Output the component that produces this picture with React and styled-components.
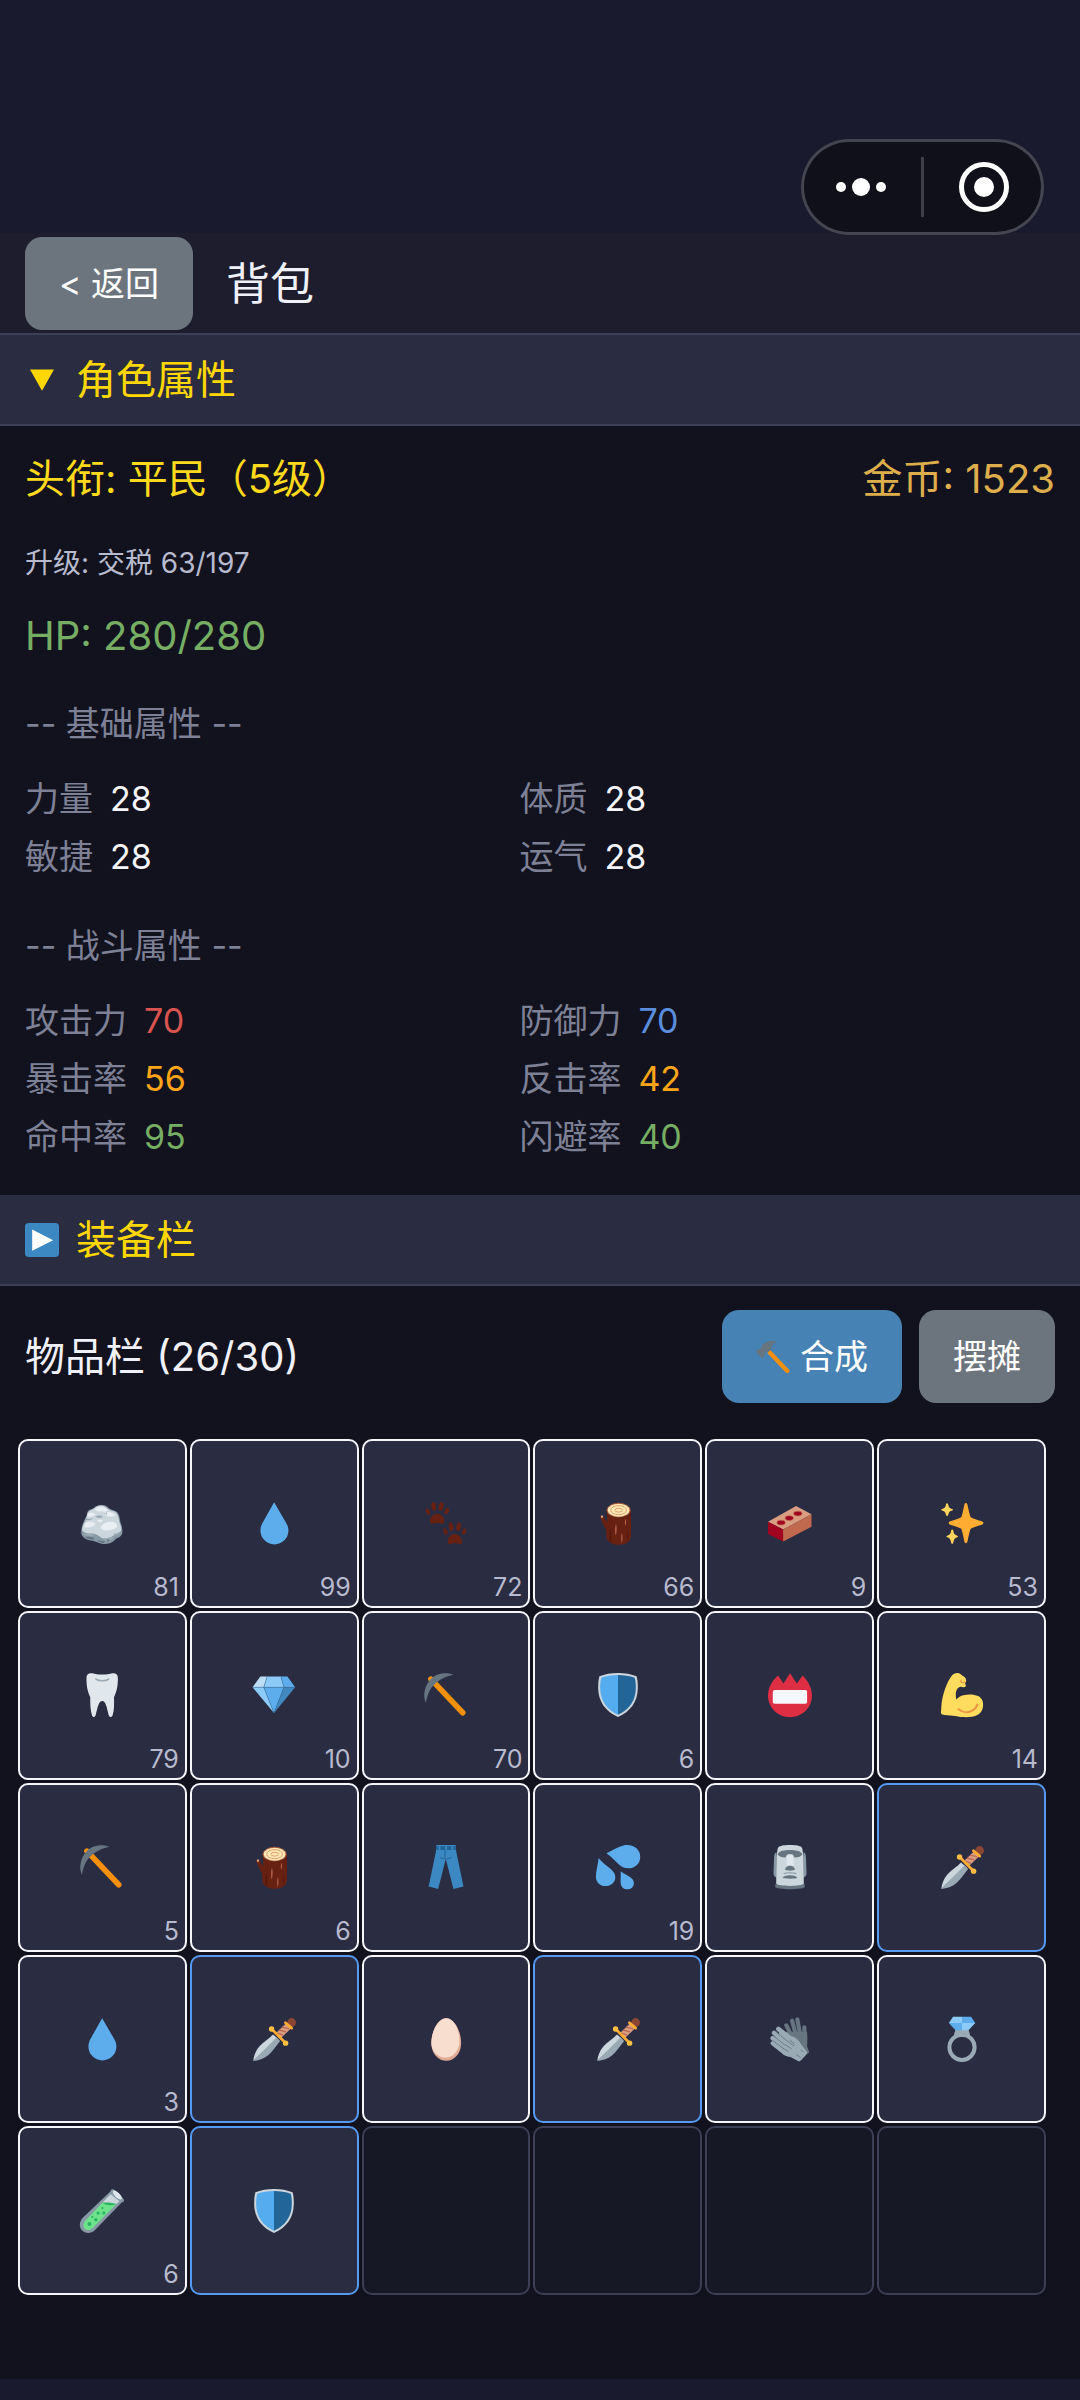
import React, { useState } from "react";
import styled, { createGlobalStyle } from "styled-components";

const GlobalStyle = createGlobalStyle`
  *, *::before, *::after { box-sizing: border-box; }
  body {
    margin: 0;
    background: #1a1a2e;
    color: #f0f0f8;
    font-family: "Inter", "Noto Sans CJK SC", sans-serif;
  }
  button { font: inherit; color: inherit; border: 0; margin: 0; cursor: pointer; }
  h1, h2, h3, p, dl, dd, dt, ul { margin: 0; padding: 0; font-weight: 400; }
`;

const Page = styled.div`
  position: relative;
  display: flex;
  flex-direction: column;
  padding-bottom: 21px;
`;

const StatusArea = styled.div`
  height: 233px;
`;

const Capsule = styled.div`
  position: absolute;
  top: 139px;
  right: 36px;
  display: flex;
  align-items: center;
  width: 243px;
  height: 96px;
  border-radius: 48px;
  background: #10101a;
  box-shadow: inset 0 0 0 3px #454551;
`;

const CapsuleButton = styled.button`
  flex: 1;
  display: flex;
  align-items: center;
  justify-content: center;
  padding: 0;
  background: none;
`;

const CapsuleDivider = styled.span`
  width: 3px;
  height: 60px;
  background: #3f3f4b;
`;

const Header = styled.header`
  display: flex;
  align-items: center;
  gap: 33px;
  padding: 4px 25px 3px;
  border-bottom: 2px solid #3c3f56;
  background: #1d1d2e;
`;

const Title = styled.h1`
  font-size: 44px;
  line-height: 60px;
`;

const ActionButton = styled.button`
  display: flex;
  align-items: center;
  justify-content: center;
  gap: 10px;
  height: 93px;
  padding: 0 34px;
  border-radius: 17px;
  background: ${(p) => (p.$primary ? "#4682b4" : "#6c757d")};
  color: #ffffff;
  font-size: 34px;
  line-height: 48px;
`;

const Main = styled.main`
  padding-bottom: 84px;
  background: #12121e;
`;

const SectionToggle = styled.button`
  display: flex;
  align-items: center;
  gap: 17px;
  width: 100%;
  padding: 17px 25px 16px;
  border-bottom: 2px solid #3c3f56;
  background: #2a2c42;
  color: #ffd700;
  font-size: 40px;
  line-height: 56px;
  text-align: left;
`;

const ArrowSlot = styled.span`
  display: flex;
  justify-content: center;
  width: 34px;
`;

const Panel = styled.section`
  padding: 25px 25px 29px;
`;

const SummaryRow = styled.div`
  display: flex;
  justify-content: space-between;
  color: ${(p) => p.$color};
  font-size: 40px;
  line-height: 56px;
`;

const GoldText = styled.span`
  color: #dfae4c;
`;

const Progress = styled.p`
  margin: 36px 0 25px;
  color: #b8bace;
  font-size: 28px;
  line-height: 40px;
`;

const GroupTitle = styled.h3`
  margin: 36px 0 22px;
  color: #7e8196;
  font-size: 34px;
  line-height: 48px;
`;

const StatGrid = styled.dl`
  display: grid;
  grid-template-columns: 48% 48%;
`;

const Stat = styled.div`
  display: flex;
  gap: 17px;
  font-size: 34px;
  line-height: 58px;
`;

const StatLabel = styled.dt`
  color: #7e8196;
`;

const StatValue = styled.dd`
  color: ${(p) => p.$color};
`;

const InventoryHeader = styled.div`
  display: flex;
  align-items: center;
  gap: 17px;
  padding: 24px 25px 36px;
`;

const InventoryTitle = styled.h2`
  flex: 1;
  font-size: 40px;
  line-height: 56px;
`;

const ItemGrid = styled.ul`
  display: grid;
  grid-template-columns: repeat(6, 1fr);
  gap: 3px;
  padding: 0 34px 0 18px;
  list-style: none;
`;

const slotBorder = { common: "#f5f5fa", rare: "#559af0", empty: "#3d3f54" };

const Slot = styled.button`
  position: relative;
  display: flex;
  align-items: center;
  justify-content: center;
  width: 100%;
  aspect-ratio: 1;
  padding: 0;
  border: 2px solid ${(p) => slotBorder[p.$kind]};
  border-radius: 10px;
  background: ${(p) => (p.$kind === "empty" ? "#161826" : "#2a2c42")};
`;

const Count = styled.span`
  position: absolute;
  right: 6px;
  bottom: 3px;
  color: #b8bace;
  font-size: 25px;
  line-height: 32px;
`;

const Icon = styled.svg`
  display: block;
  width: ${(p) => p.$size}px;
  height: ${(p) => p.$size}px;
  overflow: visible;
`;

const art = {
  rock: (
    <>
      <path fill="#8899a6" d="M1 25c.3-3 .7-5 1.600-7 .8-2.500 1.800-4.500 3-6 0-2.500.5-4 2.400-4.800 1.500-.6 2.500-.9 3.500-1.700C13 4 15 3.300 17 3.300c2 0 4 .2 5.200 1.200C23.500 6 25 6.800 27 7.500c3 .6 4 1.800 5 4.500.6 2 .8 4 1.200 6 1 2.200 1.500 4.500 1.500 7 0 3-1.500 4.500-4.500 5.500-2 1.500-3 3-5.200 3.800-2.500.8-5 1-7.500.6-2.500-.5-4.500-1.900-7-2.400-2.500-.4-5-.8-7-2.300C1.500 28.800.9 27 1 25z" />
      <path fill="#ccd6dd" d="M1.600 24c.5-3.500 1.400-5.500 2.900-7.500C5.500 14 5.300 9 8.500 7.700 11.500 6.500 13.500 3.600 17 3.600c4.500.1 5 3.400 9 4.300 4 .7 5.200 3.100 5.700 7 .4 3.100 2.300 5.600 2 9.100-1.700 2.800-4.200 3-6.700 4.500-2.300 1.800-5.500 3-8.500 2-3.500-2.200-5-4-9-4-3 .2-6 .3-7.900-2.500z" />
      <path fill="#e8eef2" d="M12 7.200c1.500-1.900 3.500-2.900 6-2.600 2 .2 3.500 1.600 5 2.700-2 1.800-4 1.600-5.500.9-2 .9-3.500.3-5.500-1zM6.500 10.500c2.500-1.700 5-1.200 6 .5-1.200 1.700-4 2.200-6.500 1.600zM20.500 9.500c3-1 6-.5 8.500 2-2 1.800-5 1.500-7 .6zM17 21c2.500-3.500 6.500-5 11-3.600 1.500.8 2.500 2 2.500 3.600-3 3-9.500 4.500-13.500 1.500zM3.500 18.500c3-2 7-2 9.500.2-1.800 2.600-6.500 3.600-9.500 2.800zM14 16c1.500-1.500 3-1 4.500 0-1.200 1.800-3.200 1.600-4.500 0z" />
      <path fill="#9aaab4" d="M12.500 12.500c2-1 4.500-1 6.500.4-1.500 1.300-4.500 1.600-6.500-.4zM5 14.200c2 .8 4.500.6 6-.4-.5 1.800-4 2.600-6.300 1.600zM3 26.500c3 .8 6 .2 9 1-1 1.900-5.500 1.600-8.500.6zM20 30c3 1 5.500-1 8-.6-1.500 2.600-5.500 3.600-8.500 2.600zM27.500 26.500c2 .4 4-.3 6-2-.5 3-3.300 4-5.500 3.600zM20.500 10.300l1.500-.8.2 1.500z" />
      <path fill="#66757f" d="M4 29.400c2.500-.4 5.500.1 8 .8l-1 1.400c-2.500-.1-5-.4-7-2.200zM14 32c2 .2 4 1.200 6.500 1l-1 1.400c-2 .1-4-.6-5.500-2.400zM22 32l1.500-1 .5 1.600-1.500.8z" />
    </>
  ),
  drop: <path fill="#5dadec" d="M18.100 1 8.900 17.300C7.500 19.500 6.900 22 6.900 24.100a11.400 11.400 0 0 0 22.900 0c0-2.300-.8-4.700-2.200-6.800z" />,
  paws: (
    <g fill="#662113">
      <path d="M4.900 16.800c0-3.600 2.600-6.400 5.900-6.400s5.800 2.800 5.800 6.400c0 1-.6 1.700-1.700 1.700-1.400 0-2.300-.8-4.100-.8s-2.700.8-4.200.8c-1 0-1.700-.7-1.700-1.700z" />
      <ellipse cx="3.200" cy="8.600" rx="1.600" ry="2.700" transform="rotate(-20 3.200 8.600)" />
      <ellipse cx="7.900" cy="4.500" rx="1.900" ry="3.500" transform="rotate(-8 7.900 4.500)" />
      <ellipse cx="14" cy="4.500" rx="1.900" ry="3.500" transform="rotate(12 14 4.500)" />
      <ellipse cx="18.700" cy="8.400" rx="1.600" ry="2.700" transform="rotate(24 18.700 8.400)" />
      <path d="M19.400 33.500c0-3.600 2.600-6.400 5.900-6.400s5.800 2.800 5.800 6.400c0 1-.6 1.700-1.700 1.700-1.400 0-2.300-.8-4.100-.8s-2.700.8-4.200.8c-1 0-1.700-.7-1.700-1.700z" />
      <ellipse cx="17.500" cy="25" rx="1.600" ry="2.700" transform="rotate(-20 17.500 25)" />
      <ellipse cx="22.200" cy="21" rx="1.900" ry="3.500" transform="rotate(-8 22.200 21)" />
      <ellipse cx="28.300" cy="21" rx="1.900" ry="3.500" transform="rotate(12 28.300 21)" />
      <ellipse cx="32.800" cy="25" rx="1.600" ry="2.700" transform="rotate(18 32.800 25)" />
    </g>
  ),
  log: (
    <>
      <path fill="#662113" d="M8.800 7.500h19.600c.3 4 .3 16.500.2 21.500-.2 4.200-4.600 6.800-10 6.800S8.600 33.200 8.500 29c0-2-.1-4-.4-5.500-1.600-3-2.800-6.200-4.300-9.200-.4-1.500.2-2.600 1.400-2.500 1 .1 1.200 1.200 1.500 2.100l2.500 3.300z" />
      <ellipse cx="4.900" cy="12.900" rx=".9" ry="1.200" fill="#d99e82" />
      <ellipse cx="18.500" cy="7.500" rx="9.800" ry="6" fill="#a0533a" />
      <ellipse cx="18.500" cy="7.500" rx="8.900" ry="5.300" fill="#ffe8b6" />
      <g fill="none" stroke="#d99e6a" strokeWidth=".8">
        <ellipse cx="18.500" cy="7.500" rx="6.400" ry="3.700" />
        <ellipse cx="18.500" cy="7.500" rx="3" ry="1.600" />
      </g>
      <path fill="#c1694f" d="M16.300 18.500c.8 2.500.8 6.500-.2 10-.6-3-.6-7 .2-10zM21.200 26c.6 2.500.6 6-.1 9-.6-3-.6-6.500.1-9zM24 14.500c.7 1.500.7 4 0 5.800-.5-1.800-.5-4.300 0-5.800z" />
      <path fill="#4c160b" d="M12 22c.4 4 .4 9 0 12l-.7-.5c-.2-4 .1-8 .7-11.500zM26 24.500c.4 3 .3 6-.2 8.500-.4-3-.3-6 .2-8.500z" />
    </>
  ),
  brick: (
    <>
      <path fill="#d99e82" d="M0 16.900 23 4.100l12.600 6.800-23.200 12.500z" />
      <path fill="#a0041e" d="M0 16.900l12.400 6.500V33.200L0 27z" />
      <path fill="#c1694f" d="m35.600 10.900-23.200 12.500v9.800L35.600 21z" />
      <g fill="#a0041e" stroke="#c1694f" strokeWidth=".6">
        <ellipse cx="10.700" cy="17.700" rx="3.400" ry="1.900" />
        <ellipse cx="17.400" cy="14" rx="3.400" ry="1.900" />
        <ellipse cx="24.400" cy="10.300" rx="3.400" ry="1.900" />
      </g>
    </>
  ),
  sparkles: (
    <>
      <path fill="#ffac33" d="M21.200 1.600c.8 0 1.100.8 1.300 1.600 1 4.500 1.700 7.800 2.600 10 2.200 1.200 5 2 9 3.300.9.300 1.400.8 1.400 1.500s-.5 1.200-1.400 1.500c-4 1.200-6.800 2-9 3.200-.9 2.300-1.600 5.600-2.600 10.200-.2.800-.5 1.600-1.300 1.600s-1.100-.8-1.300-1.600c-1-4.600-1.600-7.900-2.500-10.200-2.200-1.200-5-2-9-3.200-.8-.3-1.300-.8-1.300-1.500s.5-1.200 1.300-1.500c4-1.300 6.800-2.100 9-3.300.9-2.200 1.500-5.500 2.500-10 .2-.8.500-1.600 1.300-1.600z" />
      <path fill="#ffd45c" d="M5.800 1.900c.5 0 .7.500.9 1 .4 1.500.7 2.100 1.100 2.600.6.400 1.300.7 2.200 1 .8.300.8.900 0 1.200-.9.300-1.600.6-2.200 1-.4.600-.7 1.200-1.100 2.600-.2.600-.4 1-.9 1s-.7-.4-.9-1c-.4-1.400-.7-2-1.100-2.600-.6-.4-1.300-.7-2.200-1-.8-.3-.8-.9 0-1.200.9-.3 1.600-.6 2.200-1 .4-.5.700-1.100 1.100-2.600.2-.5.400-1 .9-1zM10 23.300c.5 0 .7.500.9 1 .4 1.800.7 2.500 1.100 3 .6.500 1.300.8 2.100 1.100.8.300.8 1 0 1.300-.8.300-1.500.6-2.100 1.100-.4.600-.7 1.300-1.100 3.100-.2.600-.4 1-.9 1s-.7-.4-.9-1c-.4-1.800-.7-2.500-1.100-3.100-.6-.5-1.300-.8-2.100-1.100-.8-.3-.8-1 0-1.300.8-.3 1.500-.6 2.100-1.100.4-.5.700-1.200 1.100-3 .2-.5.400-1 .9-1z" />
    </>
  ),
  tooth: (
    <>
      <path fill="#e1e8ed" d="M5.300 4C5.300 1 7.500-.1 10 .2c4.500 1.500 12 1.500 16.500 0C29-.1 31 1 31 4c0 6-.5 10-3.200 15.800.1 4.700.4 10.200-1.100 14.700-.9 1.900-2.400 1.900-3.200 0C21.800 28 21 23 18.200 23s-3.700 5-5.400 11.500c-.8 1.900-2.200 1.900-3 0-1.400-4.500-1.500-10-1.400-14.700C5.800 14 5.300 10 5.300 4z" />
      <path fill="none" stroke="#99aab5" strokeWidth="1.200" strokeLinecap="round" d="M13 5c2 1.800 8.500 1.800 10.500 0" />
    </>
  ),
  gem: (
    <>
      <path fill="#bdddf4" d="M6.800 2.800h5.600L9.600 11.700H.4z" />
      <path fill="#8ccaf7" d="M12.400 2.800h11.200l2.500 8.900H9.600zM.4 11.700h9.200L18 32.700z" />
      <path fill="#5dadec" d="M23.600 2.800H29l6.300 8.900h-9.200zM9.600 11.700h16.500L18 32.700z" />
      <path fill="#4289c1" d="M26.100 11.700h9.200L18 32.700z" />
      <path fill="none" stroke="#2f6a99" strokeWidth=".35" d="M.4 11.700h34.900M12.400 2.800 9.600 11.700 18 32.700l8.100-21-2.500-8.900" />
    </>
  ),
  pick: (
    <>
      <path stroke="#f4900c" strokeWidth="4.600" strokeLinecap="round" d="m5.700 5 26 27.500" />
      <path fill="#66757f" d="M24.200 1.400C19.500-.7 11-.6 5.800 4.800.5 10-1.300 18.500 1.600 24.600c.9-6.100 2.900-11.400 6.800-15.200 4.100-4 9.100-6.500 15.800-8z" />
    </>
  ),
  shield: (
    <>
      <path fill="#ccd6dd" d="M18 0c5.500 0 11 1 15.200 2.700.9 3 1 6.300 1 9.500C34.200 23.500 28 31.500 18 36 8 31.500 1.800 23.500 1.800 12.200c0-3.200.1-6.500 1-9.500C7 1 12.500 0 18 0z" />
      <path fill="#55acee" d="M18 1.600c-4.800 0-9.700.8-13.700 2.200-.7 2.600-.9 5.400-.9 8.400C3.400 22.600 9 29.900 18 34.200z" />
      <path fill="#226699" d="M18 1.600c4.800 0 9.700.8 13.700 2.200.7 2.600.9 5.400.9 8.400C32.600 22.600 27 29.900 18 34.200z" />
    </>
  ),
  badge: (
    <>
      <path fill="#dd2e44" d="M8.200 2C3 6.500 0 12.500 0 18.500 0 28.500 8 36.200 18 36.200s18-7.700 18-17.700c0-6-3-12-7.700-16.500l-4.700 6.500L18 .3l-5.300 8.200z" />
      <rect x="3.900" y="13.900" width="28.100" height="11.300" rx="1.500" fill="#f5f8fa" />
    </>
  ),
  arm: (
    <>
      <path fill="#ffdc5d" d="M14.400 0c1.700.2 2.900 1.200 4 2.300 1.500.6 2.600 1.600 2.800 3 .4 1.200.3 2.200-.8 2.600l.7 2.100c.2 1.200-.7 1.700-1.700 1.600l-2.800-.3c-1.800.6-3 2-3.500 4.200-.4 2.100-.2 4.200.3 6.200 1.500-2 3.600-3 5.800-3.500 3.500-1 8.500-1 12 .7 3 1.500 4.200 4.300 4.100 7.500-.2 3.800-1.600 6.200-4.300 7.700-3.500 1.800-7.800 2.200-12 2-3-.1-5.700-1.100-8.300-1.200-3-.2-6.500-.1-9-.9-1.200-.6-.9-2.200-.8-3.500C1.100 26 1.600 21 3 16.500 4.300 12 6.300 7 9 3 10.500.9 12.300 0 14.400 0z" />
      <path fill="none" stroke="#ef9645" strokeWidth="1.700" strokeLinecap="round" d="M15.200 29.600c4.500 4 12.300 3.400 15.500-3.800" />
      <path fill="none" stroke="#ef9645" strokeWidth="1.100" strokeLinecap="round" d="M20.400 7.300c-1.200 1.100-2.800 1-3.300-.1M17.200 5.800l-.1 1.400" />
    </>
  ),
  jeans: (
    <>
      <path fill="#3b88c3" d="M10.200 0h15.600l.6 5.500L32.300 34l-8.200 2L17.800 11.500 11.600 36l-7.800-2L9.700 5.500z" />
      <path fill="#226699" d="M10.100.9h15.800l.3 3.200H9.800z" />
      <path fill="#3b88c3" d="M12 0h1.400v4H12zM17.300 0h1.400v4h-1.400zM22.500 0h1.400v4h-1.400z" />
      <path fill="none" stroke="#226699" strokeWidth=".8" d="M17.200 4v6.800M13 10.300l4.800 1.300 4.800-1.300" />
    </>
  ),
  sweat: (
    <path fill="#5dadec" d="M8.500 6.800C13 5 17.500 1.500 22.500.400 29 -1 36.200 2.500 36.200 9.600c0 6.500-5.200 9.500-9.700 9.500-3.500 0-6-1.600-8-3.400-3.500-2.900-6-6.400-10-8.900zM2.100 10.700c3 4 6.900 6.400 10.400 9.400 2.200 2 3.400 4.200 3.300 6.500-.2 4.400-3.800 7-7.900 7-4.800 0-8-3.500-8-7.700 0-4.900 1.900-10 2.200-15.200zM20.200 21.500c2 1.800 4.900 2.900 7.600 4.700 2.200 1.500 3.200 3 3.200 5 0 3-2.500 5.100-5.300 5.100-3 0-5.300-2.300-5.500-5.100-.2-3 .1-6.200 0-9.700z" />
  ),
  moai: (
    <>
      <path fill="#8899a6" d="M7 6c-1.400 0-2 2-2.100 5l-.4 12c0 2 .8 3.500 2.500 3.500zM29 6c1.400 0 2 2 2.100 5l.4 12c0 2-.8 3.500-2.500 3.500z" />
      <path fill="#66757f" d="M6.300 31.500h23.400l.5 2.500c0 3-24.400 3-24.400 0z" />
      <path fill="#ccd6dd" d="M7.900 3C8.200.5 13 0 18 0s9.800.5 10.100 3l.9 6.500.3 22c-1.500 2.600-21.100 2.600-22.600 0l.3-22z" />
      <path fill="#66757f" d="M7.800 7.300C9.500 4.700 13.500 4 18 4s8.500.7 10.200 3.300c-.8 2-3.400 2.800-6.700 2.900-.4-2-1.200-2.900-3.500-2.900s-3.100.9-3.500 2.900c-3.300-.1-5.900-.9-6.700-2.900z" />
      <path fill="#e1e8ed" d="M15.500 8.700c1-.8 4-.8 5 0l.5 8.300c-1.500-.9-4.500-.9-6 0z" />
      <path fill="#66757f" d="M13.900 20.300c.3-2 2-3.300 4.100-3.300s3.800 1.300 4.100 3.300c-1 .9-7.200.9-8.200 0zM12 26.800c.5-1.400 3-2.100 6-2.100s5.500.7 6 2.100c-1.500 1-10.500 1-12 0z" />
      <path fill="none" stroke="#8899a6" strokeWidth=".9" d="M12.800 23.600c2-1.200 8.400-1.200 10.400 0" />
    </>
  ),
  dagger: (
    <>
      <path fill="#ccd6dd" d="M1 36C1.500 32 3 27.500 6 24.200c3.500-3.700 7.500-6 11.200-9.800l3.300 2.800z" />
      <path fill="#99aab5" d="M1 36c4.500-.6 9-2 12.500-5 3.300-3 6.300-7.500 9.500-11.400l-2.800-3z" />
      <path stroke="#d99e82" strokeWidth="5.800" d="m21 15.800 9-8.700" />
      <path stroke="#bf6952" strokeWidth="1.200" d="m22.200 10.700 5.700 1.500M20 13l5.300 1.800M24.500 8.300l5.800 1.200" />
      <circle cx="32.400" cy="4.500" r="3.600" fill="#8a4633" />
      <path stroke="#ffac33" strokeWidth="2.200" strokeLinecap="round" d="m27.300 4.700 5.200 4.400" />
      <path stroke="#ffac33" strokeWidth="2.200" d="M16 9.700 27.600 21.500" />
      <circle cx="16" cy="9.800" r="2.200" fill="#ffbe42" />
      <circle cx="27.500" cy="21.400" r="2.200" fill="#ffbe42" />
    </>
  ),
  egg: (
    <>
      <path fill="#e0aa94" d="M30.400 21.200c0 8.500-5.400 14.500-12.200 14.500S6 29.700 6 21.200C6 11.500 11.500 1 18.200 1s12.200 10.500 12.200 20.200z" />
      <path fill="#f7dece" d="M29 19.500c0 8-4.800 13.700-11.200 13.700-6 0-11.100-4.400-11.800-11.200C6 11.500 11.500 1 18.200 1 24.500 1 29 10.500 29 19.500z" />
    </>
  ),
  gloves: (
    <>
      <g stroke="#66757f" strokeWidth="3.400" strokeLinecap="round">
        <path d="m15 6.800 6 12M19.700 3l4 15M24 2l3 16M29.700 8.500l.5 12" />
      </g>
      <path fill="#66757f" d="m14.500 12 17.400 0c.6 5 .2 9 .1 12l1.600 4.500c0 1.400-1.700 2.300-3.200 1.500L19 22z" />
      <g stroke="#99aab5" strokeWidth="3.700" strokeLinecap="round">
        <path d="m8.500 9.800 13 11.500M5 13l13 12M3.800 17.300 16 27M4 21.500l10 8" />
      </g>
      <path fill="#99aab5" d="m9.700 8.500 9.300 7c3.500 1 6.500 3.500 8.200 7l4.500 5.700c.7 1-.2 2.500-1.800 4.200-1.800 2.200-3.500 4.200-5 3.900l-6.500-3.600c-2.400-.3-4.400-1.200-6.400-2.700L8 23z" />
      <path fill="none" stroke="#66757f" strokeWidth=".7" strokeLinecap="round" d="m6.200 11.700 9 7.600M4.400 15.300l9 7.300M3.900 19.400l8.500 6.200M15.500 19.500l5.500 4M14 22.500l5 3.300M12.500 25.700l4 2.500M23.500 31l3 2M27 27l2 1.500M18 19l3.500 3" />
    </>
  ),
  ring: (
    <>
      <circle cx="18" cy="24.800" r="10.300" fill="none" stroke="#99aab5" strokeWidth="3.300" />
      <path fill="#99aab5" d="m12.700 10.400-1.200 3.700 1.500 2.200h10l1.500-2.200-1.200-3.700z" />
      <path fill="#8ccaf7" d="M10.700-.3H18v5.200H7.200z" />
      <path fill="#5dadec" d="M18-.3h7.400l3.500 5.200H18zM7.200 4.900H18v5.900h-5.300z" />
      <path fill="#8ccaf7" d="M18 4.900h10.900l-5.600 5.900H18z" />
    </>
  ),
  tube: (
    <>
      <path fill="#8899a6" d="M25.700.4c.8-.5 1.600-.3 2.700.4 3 2 5.600 4.700 7.300 7.500.5.900.4 1.700-.3 2.200l-1.300.6-22 22.600c-3 3-7.600 3-10.300.3-2.600-2.700-2.600-7 .3-10.200L24.800 2z" />
      <path fill="#ccd6dd" d="M25 4.300 18.300 11.300l11.500 1L32.300 10z" />
      <path fill="#6ee38c" d="m18.300 11.300 11.500 1-19.600 19.800c-1.900 1.900-4.600 2-6.300.4-1.700-1.700-1.600-4.400.3-6.400z" />
      <path fill="#2bb563" d="M18.300 11.300c3.500-.6 8-.3 11.500 1-3.500 1.600-8.500 1.400-11.500-1z" />
      <ellipse cx="30.500" cy="4.900" rx="4.800" ry="1.900" transform="rotate(45 30.500 4.900)" fill="#e1e8ed" />
      <g fill="#2bb563">
        <circle cx="7.700" cy="28.600" r="1.700" />
        <circle cx="13" cy="25.100" r="1.400" />
        <circle cx="10" cy="22.800" r=".9" />
        <circle cx="14.800" cy="19.700" r="1.300" />
        <circle cx="19.500" cy="19.600" r="1.300" />
        <circle cx="18.400" cy="15.600" r=".9" />
      </g>
    </>
  ),
  hammer: (
    <>
      <path stroke="#f4900c" strokeWidth="4.600" strokeLinecap="round" d="m14.500 13.200 18.700 19.500" />
      <path fill="#66757f" d="M22.600 1.900c-5-1.700-10.600-.9-14.600 2.200C6 5.900 6.300 8 4.600 9.500L2.400 10c-1 .8-1.900 1.700-2.300 2.700l6.400 6.500c1-.4 1.900-1.200 2.500-2.200-.1-1.700-.1-2.700.9-3.700l1-.9 1.500.9 4.500-4.200-.7-1.300c.9-2.500 3-4.700 6.400-5.900z" />
    </>
  ),
  play: (
    <>
      <rect width="36" height="36" rx="4" fill="#3b88c3" />
      <path fill="#fff" d="M7.600 7v22.500L29.800 18.200z" />
    </>
  ),
  triangle: <path fill="#ffd700" d="M5.300 7h25.400L18 29.500z" />,
  more: (
    <g fill="#fff">
      <circle cx="-2" cy="18" r="5" />
      <circle cx="18" cy="18" r="9" />
      <circle cx="38" cy="18" r="5" />
    </g>
  ),
  close: (
    <>
      <circle cx="18" cy="18" r="22.500" fill="none" stroke="#fff" strokeWidth="5" />
      <circle cx="18" cy="18" r="10" fill="#fff" />
    </>
  ),
};

const Glyph = ({ name, size }) => (
  <Icon viewBox="0 0 36 36" $size={size} fill="none" aria-hidden="true">
    {art[name]}
  </Icon>
);

const GREEN = "#76ae64";
const ORANGE = "#ffa516";

const baseStats = [
  ["力量", 28, "#f5f5fa"],
  ["体质", 28, "#f5f5fa"],
  ["敏捷", 28, "#f5f5fa"],
  ["运气", 28, "#f5f5fa"],
];

const combatStats = [
  ["攻击力", 70, "#d9534f"],
  ["防御力", 70, "#5a8edd"],
  ["暴击率", 56, ORANGE],
  ["反击率", 42, ORANGE],
  ["命中率", 95, GREEN],
  ["闪避率", 40, GREEN],
];

const items = [
  { icon: "rock", name: "石头", count: 81 },
  { icon: "drop", name: "水", count: 99 },
  { icon: "paws", name: "爪印", count: 72 },
  { icon: "log", name: "木头", count: 66 },
  { icon: "brick", name: "砖块", count: 9 },
  { icon: "sparkles", name: "星尘", count: 53 },
  { icon: "tooth", name: "牙齿", count: 79 },
  { icon: "gem", name: "宝石", count: 10 },
  { icon: "pick", name: "镐", count: 70 },
  { icon: "shield", name: "盾牌", count: 6 },
  { icon: "badge", name: "名牌" },
  { icon: "arm", name: "力量药剂", count: 14 },
  { icon: "pick", name: "镐", count: 5 },
  { icon: "log", name: "木头", count: 6 },
  { icon: "jeans", name: "裤子" },
  { icon: "sweat", name: "汗水", count: 19 },
  { icon: "moai", name: "石像" },
  { icon: "dagger", name: "匕首", kind: "rare" },
  { icon: "drop", name: "水", count: 3 },
  { icon: "dagger", name: "匕首", kind: "rare" },
  { icon: "egg", name: "蛋" },
  { icon: "dagger", name: "匕首", kind: "rare" },
  { icon: "gloves", name: "手套" },
  { icon: "ring", name: "戒指" },
  { icon: "tube", name: "试管", count: 6 },
  { icon: "shield", name: "盾牌", kind: "rare" },
];

const CAPACITY = 30;

const Stats = ({ rows }) => (
  <StatGrid>
    {rows.map(([label, value, color]) => (
      <Stat key={label}>
        <StatLabel>{label}</StatLabel>
        <StatValue $color={color}>{value}</StatValue>
      </Stat>
    ))}
  </StatGrid>
);

const Section = ({ title, open, onToggle }) => (
  <SectionToggle type="button" aria-expanded={open} onClick={onToggle}>
    <ArrowSlot>
      <Glyph name={open ? "triangle" : "play"} size={34} />
    </ArrowSlot>
    {title}
  </SectionToggle>
);

export default function App() {
  const [statsOpen, setStatsOpen] = useState(true);
  const [gearOpen, setGearOpen] = useState(false);
  const slots = Array.from({ length: CAPACITY }, (_, i) => items[i]);

  return (
    <>
      <GlobalStyle />
      <Page>
        <StatusArea />
        <Header>
          <ActionButton type="button">&lt; 返回</ActionButton>
          <Title>背包</Title>
        </Header>
        <Capsule>
          <CapsuleButton type="button" aria-label="更多">
            <Glyph name="more" size={36} />
          </CapsuleButton>
          <CapsuleDivider />
          <CapsuleButton type="button" aria-label="关闭">
            <Glyph name="close" size={36} />
          </CapsuleButton>
        </Capsule>
        <Main>
          <Section title="角色属性" open={statsOpen} onToggle={() => setStatsOpen(!statsOpen)} />
          {statsOpen && (
            <Panel>
              <SummaryRow $color="#ffd91c">
                <span>头衔: 平民（5级）</span>
                <GoldText>金币: 1523</GoldText>
              </SummaryRow>
              <Progress>升级: 交税 63/197</Progress>
              <SummaryRow $color={GREEN}>HP: 280/280</SummaryRow>
              <GroupTitle>-- 基础属性 --</GroupTitle>
              <Stats rows={baseStats} />
              <GroupTitle>-- 战斗属性 --</GroupTitle>
              <Stats rows={combatStats} />
            </Panel>
          )}
          <Section title="装备栏" open={gearOpen} onToggle={() => setGearOpen(!gearOpen)} />
          <InventoryHeader>
            <InventoryTitle>
              物品栏 ({items.length}/{CAPACITY})
            </InventoryTitle>
            <ActionButton type="button" $primary>
              <Glyph name="hammer" size={34} />
              合成
            </ActionButton>
            <ActionButton type="button">摆摊</ActionButton>
          </InventoryHeader>
          <ItemGrid>
            {slots.map((item, i) => (
              <li key={i}>
                <Slot
                  type="button"
                  aria-label={item ? `${item.name} ${item.count ?? 1}` : "空格"}
                  $kind={item ? item.kind || "common" : "empty"}
                >
                  {item && <Glyph name={item.icon} size={44} />}
                  {item?.count && <Count>{item.count}</Count>}
                </Slot>
              </li>
            ))}
          </ItemGrid>
        </Main>
      </Page>
    </>
  );
}
